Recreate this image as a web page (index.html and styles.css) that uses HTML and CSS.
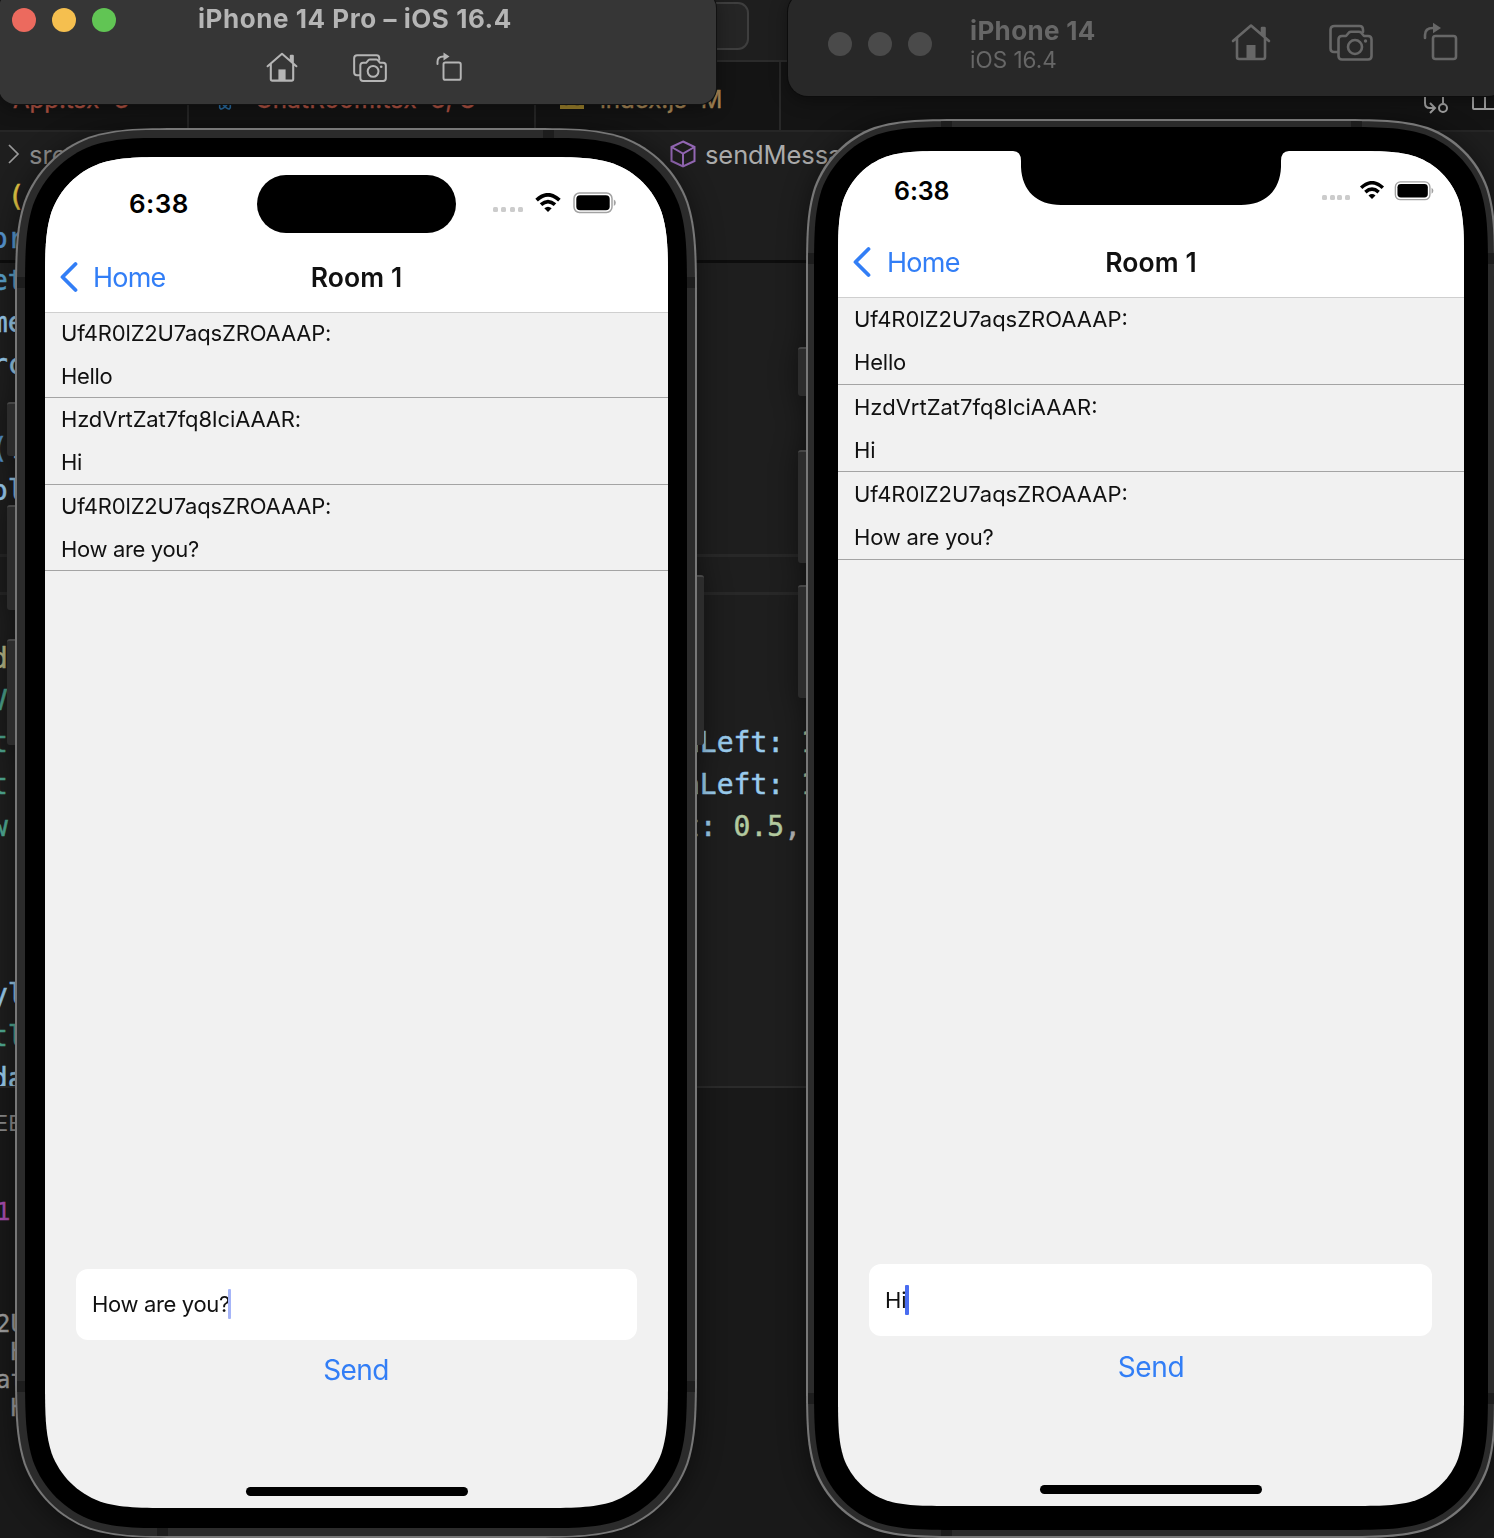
FILE: index.html
```html
<!DOCTYPE html>
<html lang="en">
<head>
<meta charset="utf-8">
<title>Simulators</title>
<link rel="stylesheet" href="styles.css">
</head>
<body>
<svg class="defs" aria-hidden="true">
  <symbol id="home" viewBox="0 0 40 40">
    <path d="M2 19 20 3.500 38 19M6 16v19q0 2 2 2h24q2 0 2-2V16M31 12V6h2.500v9" />
    <path class="solid" d="M15.500 23h9v14h-9z"/>
  </symbol>
  <symbol id="camera" viewBox="0 0 44 40">
    <path d="M9 30H5q-3.500 0-3.500-3.500V8q0-4 4-4h25q3.500 0 3.500 4v2"/>
    <path d="M13 14h4l3-3.500q.8-.8 2-.8h8q1.200 0 2 .8l3 3.500h4q3.500 0 3.500 3.500V34q0 3.500-3.500 3.500H13q-3.500 0-3.500-3.500V17.500q0-3.500 3.500-3.500z"/>
    <circle cx="26" cy="25" r="7"/><circle class="solid" cx="36.500" cy="19" r="1.700"/>
  </symbol>
  <symbol id="rotate" viewBox="0 0 36 40">
    <rect x="10" y="14" width="23" height="23" rx="2.500"/>
    <path d="M2 16v-3q0-7 8-7h3"/><path class="solid" d="M10 .8 18 6l-8 5.200z"/>
  </symbol>
  <symbol id="wifi" viewBox="0 0 26 20">
    <path d="M1.600 7.200Q13-3.600 24.400 7.200M6 11.700q7-6.200 14 0" />
    <path class="solid" d="M9.300 15.300q3.700-3 7.400 0L13 19z"/>
  </symbol>
  <symbol id="battery" viewBox="0 0 43 22">
    <rect class="shell" x="1" y="1" width="38" height="19.500" rx="5.500"/>
    <rect class="charge" x="3.300" y="3.200" width="33.400" height="15" rx="3.800"/>
    <path class="tip" d="M40.800 7.500q2 1 2 3.200t-2 3.200z"/>
  </symbol>
</svg>

<main class="desktop">
  <section class="editor">
    <div class="titlebar"><div class="search"></div></div>
    <div class="tabs">
      <div class="tab tab-app error"><span>App.tsx</span><span>3</span></div>
      <div class="tab tab-room error">
        <svg class="react" viewBox="0 0 20 20"><ellipse cx="10" cy="10" rx="9" ry="3.500"/><ellipse cx="10" cy="10" rx="9" ry="3.500" transform="rotate(60 10 10)"/><ellipse cx="10" cy="10" rx="9" ry="3.500" transform="rotate(120 10 10)"/></svg>
        <span class="room-name">ChatRoom.tsx</span><span>3, U</span>
      </div>
      <div class="tab tab-index modified"><b class="js">JS</b><span>index.js</span><span>M</span></div>
      <div class="actions">
        <svg class="compare" viewBox="0 0 26 28"><path d="M2 2v14q0 5 5 5h4M7 16l5 5-5 5M20 2v15"/><circle cx="20" cy="21" r="4"/></svg>
        <svg class="split" viewBox="0 0 26 28"><rect x="1" y="1" width="24" height="21" rx="1"/><path d="M13 1v21"/></svg>
      </div>
    </div>
    <div class="crumbs">
      <svg class="chev" viewBox="0 0 12 20"><path d="M1 1l9 9-9 9"/></svg><span class="src">src</span>
      <svg class="chev second" viewBox="0 0 12 20"><path d="M1 1l9 9-9 9"/></svg>
      <svg class="cube" viewBox="0 0 26 28"><path d="M13 1.500 24.500 7v14L13 26.500 1.500 21V7zM1.500 7 13 13.500 24.500 7M13 13.500v13"/></svg>
      <span class="symbol">sendMessage</span>
    </div>
    <div class="code">
      <pre class="code-left"> <i class="y">(</i>
<i class="b">or</i>
<i class="c">et</i>
<i class="p">me</i>
<i class="p">rc</i>

<i class="b">(</i><i class="p">.</i>
<i class="p">ol</i>



<i class="f">d</i>
<i class="g">V</i>
<i class="g">t</i>
<i class="g">t</i>
<i class="g">w</i>



<i class="p">yl</i>
<i class="g">tl</i>
<i class="p">da</i></pre>
      <div class="line-box"></div>
      <pre class="code-right"><i class="p">nLeft:</i> <i class="n">10</i>
<i class="p">nLeft:</i> <i class="n">10</i>
<i class="p">t:</i> <i class="n">0.5</i>,</pre>
    </div>
    <div class="panel">
      <div class="panel-tab">EBUG</div>
      <div class="status-one">1:</div>
      <pre class="log">2U
 H
at
 H</pre>
    </div>
  </section>

  <article class="phone phone-pro">
    <i class="key k1"></i><i class="key k2"></i><i class="key k3"></i><i class="key k4"></i>
    <div class="rim" data-radius="117"><div class="band" data-radius="116">
      <i class="seam s1"></i><i class="seam s2"></i><i class="seam s3"></i><i class="seam s4"></i><i class="seam s5"></i><i class="seam s6"></i>
      <div class="bezel" data-radius="107">
      <div class="screen" data-radius="87">
        <div class="status"><span class="time">6:38</span><span class="island"></span>
          <span class="indicators"><span class="dots"><i></i><i></i><i></i><i></i></span><svg class="wifi"><use href="#wifi"/></svg><svg class="battery"><use href="#battery"/></svg></span></div>
        <header class="nav"><a class="back"><svg viewBox="0 0 18 32"><path d="M16 3 3 16l13 13"/></svg><span>Home</span></a><h1>Room 1</h1></header>
        <ul class="messages">
          <li><p class="id">Uf4R0lZ2U7aqsZROAAAP:</p><p>Hello</p></li>
          <li><p class="id">HzdVrtZat7fq8IciAAAR:</p><p>Hi</p></li>
          <li><p class="id">Uf4R0lZ2U7aqsZROAAAP:</p><p>How are you?</p></li>
        </ul>
        <div class="composer"><span>How are you?</span><i class="caret"></i></div>
        <button class="send">Send</button>
        <div class="grabber"></div>
      </div>
    </div></div></div>
  </article>

  <article class="phone phone-base">
    <i class="key k1"></i><i class="key k2"></i><i class="key k3"></i>
    <div class="rim" data-radius="108"><div class="band" data-radius="107">
      <i class="seam s1"></i><i class="seam s2"></i><i class="seam s3"></i><i class="seam s4"></i><i class="seam s5"></i><i class="seam s6"></i><i class="seam s7"></i>
      <div class="bezel" data-radius="100">
      <div class="screen" data-radius="76">
        <div class="status"><span class="time">6:38</span>
          <svg class="notch" viewBox="0 0 276 54"><path d="M0 0Q8 0 8 10V16C9 40 24 54 48 54H228C252 54 267 40 268 16V10Q268 0 276 0z"/></svg>
          <span class="indicators"><span class="dots"><i></i><i></i><i></i><i></i></span><svg class="wifi"><use href="#wifi"/></svg><svg class="battery"><use href="#battery"/></svg></span></div>
        <header class="nav"><a class="back"><svg viewBox="0 0 18 32"><path d="M16 3 3 16l13 13"/></svg><span>Home</span></a><h1>Room 1</h1></header>
        <ul class="messages">
          <li><p class="id">Uf4R0lZ2U7aqsZROAAAP:</p><p>Hello</p></li>
          <li><p class="id">HzdVrtZat7fq8IciAAAR:</p><p>Hi</p></li>
          <li><p class="id">Uf4R0lZ2U7aqsZROAAAP:</p><p>How are you?</p></li>
        </ul>
        <div class="composer"><span>Hi</span><i class="caret"></i></div>
        <button class="send">Send</button>
        <div class="grabber"></div>
      </div>
    </div></div></div>
  </article>

  <header class="window window-pro">
    <div class="window-row"><div class="lights"><i class="red"></i><i class="yellow"></i><i class="green"></i></div><h2>iPhone 14 Pro – iOS 16.4</h2></div>
    <div class="tools"><svg class="t-home"><use href="#home"/></svg><svg class="t-camera"><use href="#camera"/></svg><svg class="t-rotate"><use href="#rotate"/></svg></div>
  </header>

  <header class="window window-base">
    <div class="lights"><i></i><i></i><i></i></div>
    <div class="names"><h2>iPhone 14</h2><p>iOS 16.4</p></div>
    <div class="tools"><svg class="t-home"><use href="#home"/></svg><svg class="t-camera"><use href="#camera"/></svg><svg class="t-rotate"><use href="#rotate"/></svg></div>
  </header>
</main>
<script src="corners.js"></script>
</body>
</html>
```
FILE: styles.css
```css
* { box-sizing: border-box; }
body { margin: 0; background: #1e1e1e; font-family: Inter, "Liberation Sans", sans-serif; }
h1, h2, p, ul, pre { margin: 0; padding: 0; }
i { font-style: normal; }
.defs { position: absolute; width: 0; height: 0; }
.desktop { position: relative; width: 1494px; height: 1538px; overflow: hidden; }

/* Editor behind the simulators */
.editor { display: flex; flex-direction: column; height: 1538px; color: #9a9a9a; }
.titlebar { height: 62px; flex: none; background: #1e1e1e; border-bottom: 2px solid #2b2b2b; padding: 2px 0 0 500px; }
.search { width: 249px; height: 48px; border: 2px solid #3e3e3e; border-radius: 11px; background: #252525; }
.tabs { display: flex; height: 70px; flex: none; background: #141414; border-bottom: 2px solid #262626; font-size: 24px; line-height: 76px; white-space: nowrap; -webkit-text-stroke: .4px currentColor; }
.tab { display: flex; border-right: 2px solid #282828; flex: none; }
.error { color: #b85646; }
.modified { color: #ab8a58; }
.tab-app { width: 189px; padding-left: 13px; gap: 15px; }
.tab-room { width: 347px; padding-left: 26px; gap: 14px; }
.react { width: 20px; height: 20px; margin-top: 29px; fill: none; stroke: #2a70a8; stroke-width: 1.600; }
.room-name { margin-left: 6px; letter-spacing: .3px; }
.tab-index { width: 245px; padding-left: 24px; gap: 14px; }
.js { width: 24px; height: 24px; background: #a3872e; color: #131313; font-size: 17px; line-height: 28px; text-align: center; margin: 23px 2px 0 0; }
.actions { display: flex; gap: 23px; margin: 0 -4px 0 auto; padding-top: 25px; flex: none; }
.actions svg { width: 26px; height: 28px; fill: none; stroke: #a2a2a2; stroke-width: 2; }
.compare { margin-left: -2px; }
.crumbs { display: flex; align-items: center; height: 44px; margin-bottom: 4px; flex: none; padding-left: 8px; font-size: 25.500px; }
.crumbs svg { fill: none; flex: none; }
.chev { width: 12px; height: 20px; stroke: #9a9a9a; stroke-width: 1.700; }
.src { width: 610px; padding-left: 9px; color: #8f8f8f; }
.second { margin-left: 8px; }
.cube { width: 26px; height: 28px; margin: 0 9px 0 20px; stroke: #9367b4; stroke-width: 2; }
.symbol { color: #ababab; letter-spacing: -.1px; }
.code { position: relative; height: 906px; flex: none; overflow: hidden; font: 28px/42px "DejaVu Sans Mono", monospace; -webkit-text-stroke: .5px currentColor; }
.code::before { content: ""; position: absolute; top: 80px; left: 0; right: 0; height: 3px; background: #0d0d0d; }
.code pre { font: inherit; }
.code-left { position: absolute; left: -9px; top: -4px; }
.code-right { position: absolute; left: 683px; top: 542px; color: #b5b5b5; }
.line-box { position: absolute; left: 0; right: 0; top: 374px; height: 41px; border: solid #282828; border-width: 3px 0; }
.y { color: #e2c544; } .b { color: #5796cf; } .c { color: #5aa2cc; } .p { color: #99cbec; }
.f { color: #bcbc8c; } .g { color: #4fa891; } .n { color: #b2c99f; }
.panel { flex: 1; background: #191919; border-top: 2px solid #2b2b2b; overflow: hidden; }
.panel-tab { margin: 22px 0 0 -5px; font-size: 22px; line-height: 26px; color: #8a8a8a; }
.status-one, .log { margin-left: -4px; font: 24px/28px "DejaVu Sans Mono", monospace; -webkit-text-stroke: .3px currentColor; }
.status-one { margin-top: 62px; color: #a84db0; }
.log { margin-top: 84px; color: #a0a0a0; }

/* Phones */
.phone { position: absolute; filter: drop-shadow(0 3px 14px rgba(0, 0, 0, .48)); }
.phone-pro { left: 15px; top: 128px; width: 682px; height: 1410px; --band: 8px; --black: 19.500px 19px 20px 20px; }
.phone-base { left: 806px; top: 119px; width: 690px; height: 1419px; --band: 6px; --black: 24px; }
.rim { height: 100%; padding: 2px; background: #777; }
.phone-pro .rim { padding: 1.500px 2px 2px; }
.band { position: relative; height: 100%; padding: var(--band); background: #2b2b2b; }
.bezel { position: relative; height: 100%; padding: var(--black); background: #000; }
.seam { position: absolute; width: 11px; height: 11px; background: #1d1d1d; }
.screen { position: relative; display: flex; flex-direction: column; height: 100%; background: #f1f1f1; color: #111; }
.key { position: absolute; left: -8px; width: 9px; border-radius: 3px 0 0 3px; background: #2c2c2c; border-top: 2px solid #464646; }
.phone-pro .k1 { top: 274px; height: 54px; }
.phone-pro .k2 { top: 377px; height: 105px; }
.phone-pro .k3 { top: 511px; height: 106px; }
.phone-pro .k4 { left: auto; right: -7px; top: 447px; height: 170px; border-radius: 0 3px 3px 0; }
.phone-base .k1 { top: 228px; height: 49px; }
.phone-base .k2 { top: 331px; height: 113px; }
.phone-base .k3 { top: 466px; height: 113px; }
.phone-pro .s1 { left: 526px; top: 0; }
.phone-pro .s2 { left: 0; top: 147px; }
.phone-pro .s3 { right: 0; top: 147px; }
.phone-pro .s4 { left: 0; top: 1251px; }
.phone-pro .s5 { right: 0; top: 1251px; }
.phone-pro .s6 { left: 140px; bottom: 0; }
.phone-base .s1 { left: 133px; top: 0; }
.phone-base .s2 { left: 543px; top: 0; }
.phone-base .s3 { left: 0; top: 132px; }
.phone-base .s4 { right: 0; top: 132px; }
.phone-base .s5 { left: 0; top: 1272px; }
.phone-base .s6 { right: 0; top: 1272px; }
.phone-base .s7 { left: 133px; bottom: 0; }

.status { position: relative; display: flex; justify-content: space-between; align-items: center; flex: none; background: #fff; color: #000; }
.phone-pro .status { height: 86px; padding: 7px 52px 0 84px; }
.phone-base .status { height: 77px; padding: 3px 30px 0 56px; }
.time { font-size: 26px; font-weight: 600; letter-spacing: .4px; }
.phone-base .time { font-size: 25px; letter-spacing: -.1px; }
.island { position: absolute; left: 212px; top: 18px; width: 199px; height: 58px; border-radius: 29px; background: #000; }
.notch { position: absolute; left: 175px; top: 0; width: 276px; height: 54px; }
.indicators { display: flex; align-items: center; margin-top: -1px; }
.dots { display: flex; gap: 3.500px; margin: 13px 12px 0 0; }
.dots i { width: 5px; height: 5px; border-radius: 1.500px; background: #ccc; }
.wifi { width: 26px; height: 20px; margin-right: 12px; fill: none; stroke: #000; stroke-width: 3.700; }
.wifi .solid, .solid { fill: currentColor; stroke: none; }
.battery { width: 43px; height: 22px; }
.shell { fill: none; stroke: #a2a2a2; stroke-width: 1.500; }
.charge { fill: #000; }
.tip { fill: #a2a2a2; }
.phone-base .dots { gap: 2.700px; margin-right: 9px; }
.phone-base .wifi { margin-right: 9px; height: 19px; }
.phone-base .battery { width: 40px; height: 20px; }
.nav { display: grid; grid-template-columns: 1fr auto 1fr; align-items: center; flex: none; height: 70px; background: #fff; border-bottom: 1px solid #cfcfcf; padding-bottom: 1px; }
.back { display: flex; align-items: center; gap: 15px; padding-left: 14px; color: #327ef6; font-size: 27px; letter-spacing: -.8px; }
.phone-base .back { gap: 16px; letter-spacing: -.7px; }
.back svg { width: 19px; height: 32px; fill: none; stroke: #327ef6; stroke-width: 3.800; stroke-linecap: round; stroke-linejoin: round; }
.nav h1 { font-size: 26.500px; font-weight: 600; letter-spacing: .1px; }
.messages { list-style: none; flex: 1; --line: 42.700px; margin-top: -1px; border-top: 1px solid #cfcfcf; }
.messages li:first-child { margin-top: -1px; }
.phone-base .messages { --line: 43.250px; }
.messages li { padding-left: 16px; border-bottom: 1px solid #a4a4a4; font-size: 22px; letter-spacing: -.35px; }
.phone-base .messages li { letter-spacing: -.2px; }
.messages p { line-height: var(--line); }
.messages .id { letter-spacing: -.17px; }
.phone-base .messages .id { letter-spacing: 0; line-height: calc(var(--line) + 1.200px); }
.phone-base .messages .id + p { line-height: calc(var(--line) - 1.200px); }
.composer { display: flex; align-items: center; flex: none; width: 561px; height: 71px; margin: 0 0 0 31px; padding: 0 0 1px 16px; border-radius: 12px; background: #fff; font-size: 22px; letter-spacing: -.35px; }
.phone-base .composer { width: 563px; height: 72px; padding-bottom: 0; letter-spacing: -.2px; }
.caret { width: 3px; height: 30px; margin-left: -2px; border-radius: 1px; background: #a6b5f8; }
.phone-base .caret { background: #4a6df0; margin-left: -1px; width: 3.500px; }
.send { flex: none; height: 60px; padding: 0; border: 0; background: none; color: #327ef6; font: 28px Inter, sans-serif; letter-spacing: -.6px; }
.phone-pro .send { padding-right: 1px; }
.grabber { flex: none; align-self: center; width: 222px; height: 9px; margin: 87px 0 12px; border-radius: 5px; background: #000; }
.phone-base .send { height: 62px; letter-spacing: -.4px; }

/* Simulator title bars */
.window { position: absolute; }
.window h2 { font-size: 26px; font-weight: 700; letter-spacing: .35px; white-space: nowrap; }
.lights { display: flex; gap: 16px; flex: none; }
.lights i { width: 24px; height: 24px; border-radius: 50%; background: #4a4a4a; }
.lights .red { background: #ec6a5e; } .lights .yellow { background: #f5bf4f; } .lights .green { background: #61c554; }
.tools { display: flex; align-items: center; }
.tools svg { flex: none; fill: none; stroke: currentColor; stroke-width: 2.600; stroke-linejoin: round; stroke-linecap: round; }
.window-pro { left: -1px; top: -8px; width: 717px; height: 112px; border-radius: 16px; background: #363636; color: #b5b5b5; box-shadow: 0 0 0 1px #111, 0 4px 18px rgba(0, 0, 0, .4); }
.window-row { display: flex; align-items: center; gap: 82px; height: 41px; padding: 15px 0 0 13px; }
.window-pro h2 { line-height: 26px; letter-spacing: .55px; margin-top: -3px; }
.window-pro .tools { padding: 18px 0 0 267px; }
.window-pro .t-home { width: 32px; height: 32px; }
.window-pro .t-camera { width: 34px; height: 31px; margin-left: 55px; }
.window-pro .t-rotate { width: 27px; height: 30px; margin-left: 49px; }
.window-base { display: flex; left: 788px; top: -8px; width: 720px; height: 104px; padding-left: 40px; border-radius: 20px; background: #282828; color: #676767; box-shadow: 0 0 0 1px #0c0c0c, 0 4px 18px rgba(0, 0, 0, .4); }
.window-base .lights { padding-top: 40px; }
.names { flex: none; width: 299px; padding: 24px 0 0 38px; }
.names h2 { line-height: 30px; }
.names p { font-size: 22.500px; line-height: 28px; }
.window-base .tools { height: 100px; }
.window-base .t-home { width: 40px; height: 40px; }
.window-base .t-camera { width: 44px; height: 40px; margin-left: 58px; }
.window-base .t-rotate { width: 36px; height: 40px; margin-left: 50px; }
```
FILE: corners.js
```js
// Clips every [data-radius] element to a rectangle with continuous-curvature corners.
document.querySelectorAll('[data-radius]').forEach(function (el) {
  var r = Number(el.dataset.radius), w = el.offsetWidth, h = el.offsetHeight;
  var steps = [[1.5287, 0], [1.0885, 0], [0.8684, 0], [0.6315, 0.0749], [0.3728, 0.1691],
    [0.1691, 0.3728], [0.0749, 0.6315], [0, 0.8684], [0, 1.0885], [0, 1.5287]];
  function corner(right, bottom, reverse) {
    var pts = steps.map(function (p) {
      var x = p[0] * r, y = p[1] * r;
      return (right ? w - x : x).toFixed(2) + ' ' + (bottom ? h - y : y).toFixed(2);
    });
    if (reverse) pts.reverse();
    return pts[0] + 'C' + pts.slice(1).join(' ');
  }
  el.style.clipPath = "path('M" + corner(true, false, false) + 'L' + corner(true, true, true) +
    'L' + corner(false, true, false) + 'L' + corner(false, false, true) + "Z')";
});
```
